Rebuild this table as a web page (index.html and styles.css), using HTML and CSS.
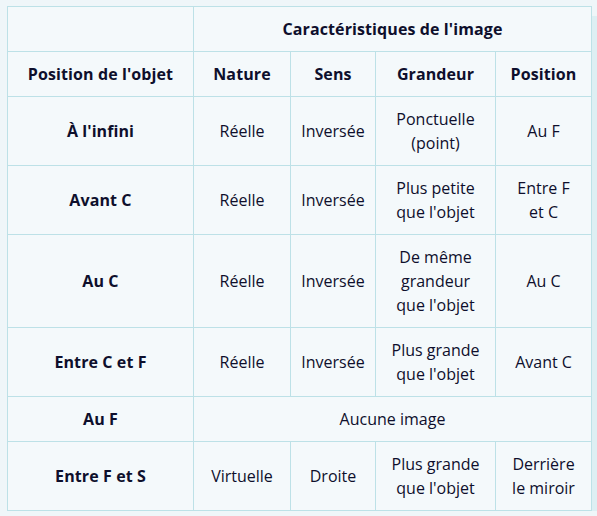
FILE: index.html
```html
<!DOCTYPE html>
<html lang="fr">
<head>
<meta charset="utf-8">
<link rel="stylesheet" href="styles.css">
</head>
<body>
<div class="wrap">
<table class="tbl">
  <colgroup>
    <col class="c1"><col class="c2"><col class="c3"><col class="c4"><col class="c5">
  </colgroup>
  <tr class="h">
    <th></th>
    <th colspan="4">Caractéristiques de l'image</th>
  </tr>
  <tr class="h">
    <th>Position de l'objet</th>
    <th>Nature</th>
    <th>Sens</th>
    <th>Grandeur</th>
    <th>Position</th>
  </tr>
  <tr>
    <th>À l'infini</th>
    <td>Réelle</td>
    <td>Inversée</td>
    <td>Ponctuelle<br>(point)</td>
    <td>Au F</td>
  </tr>
  <tr>
    <th>Avant C</th>
    <td>Réelle</td>
    <td>Inversée</td>
    <td>Plus petite<br>que l'objet</td>
    <td>Entre F<br>et C</td>
  </tr>
  <tr>
    <th>Au C</th>
    <td>Réelle</td>
    <td>Inversée</td>
    <td>De même<br>grandeur<br>que l'objet</td>
    <td>Au C</td>
  </tr>
  <tr>
    <th>Entre C et F</th>
    <td>Réelle</td>
    <td>Inversée</td>
    <td>Plus grande<br>que l'objet</td>
    <td>Avant C</td>
  </tr>
  <tr>
    <th>Au F</th>
    <td colspan="4">Aucune image</td>
  </tr>
  <tr>
    <th>Entre F et S</th>
    <td>Virtuelle</td>
    <td>Droite</td>
    <td>Plus grande<br>que l'objet</td>
    <td>Derrière<br>le miroir</td>
  </tr>
</table>
</div>
</body>
</html>
```

FILE: styles.css
```css
html, body {
  margin: 0;
  padding: 0;
  background: #eff6f9;
}
body {
  font-family: "Open Sans", "Noto Sans", sans-serif;
  color: #0e0f2c;
  overflow: hidden;
}
.wrap {
  padding: 6px 0 0 7px;
}
.tbl {
  border-collapse: collapse;
  table-layout: fixed;
  width: 584px;
  background: #f4f9fb;
  box-shadow: 10px 10px 0 #ddeff3;
  font-size: 16px;
  line-height: 24px;
}
.c1 { width: 186px; }
.c2 { width: 97px; }
.c3 { width: 85px; }
.c4 { width: 120px; }
.c5 { width: 96px; }
.tbl th, .tbl td {
  border: 1px solid #bde1e7;
  padding: 10px 2px;
  height: 24px;
  text-align: center;
  vertical-align: middle;
}
.tbl th {
  font-weight: 700;
  letter-spacing: 0.1px;
}
.tbl td {
  font-weight: 400;
}
```
